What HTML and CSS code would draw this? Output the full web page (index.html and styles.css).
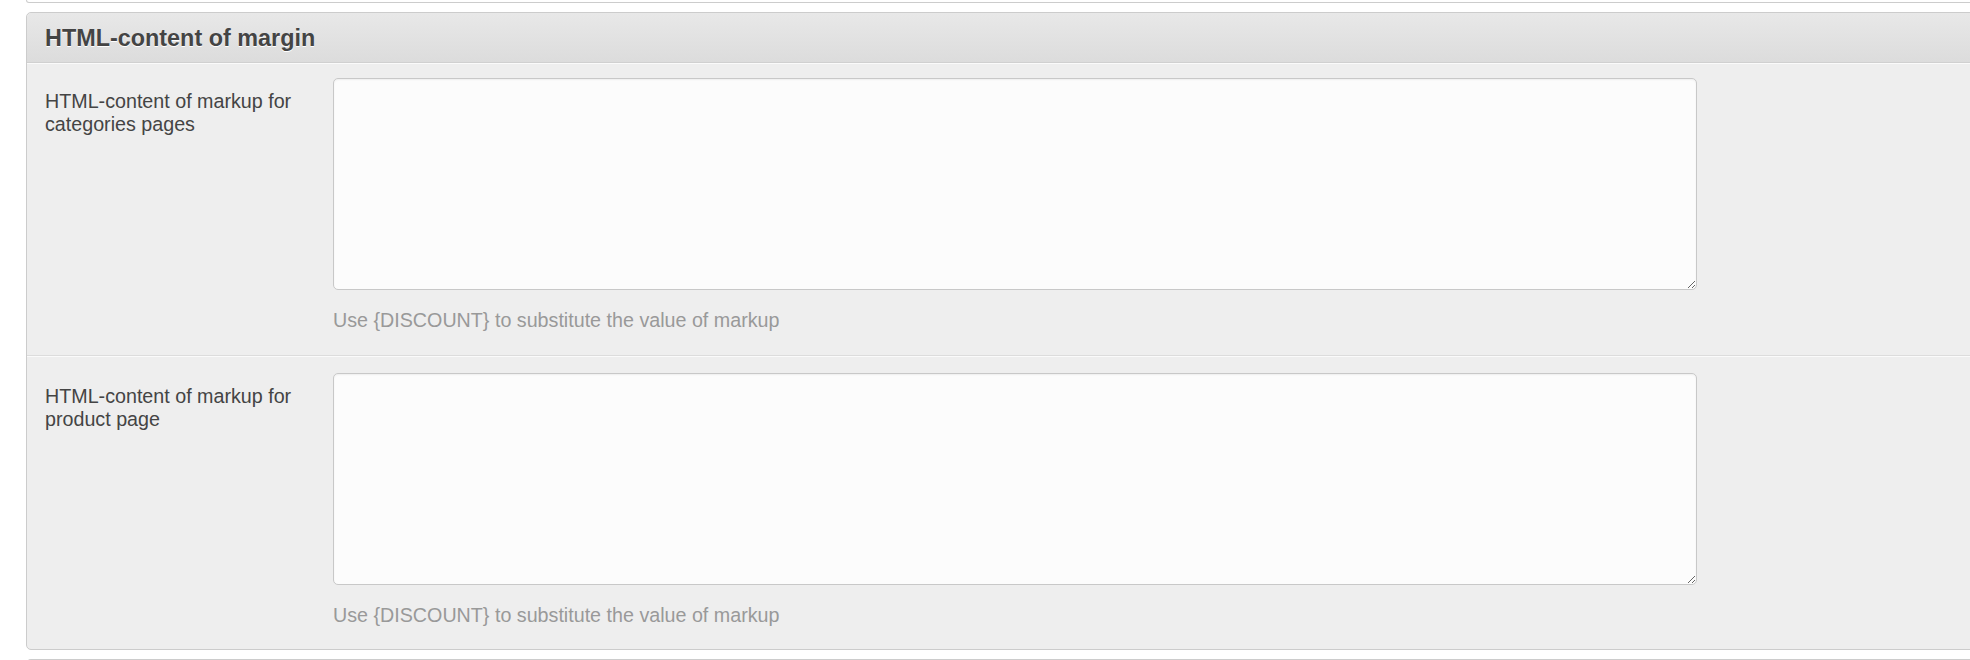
FILE: index.html
```html
<!DOCTYPE html>
<html>
  <head>
    <title>HTML-content of margin</title>
<link rel="stylesheet" href="styles.css">
  </head>
  <body>
    <div class="page">
      <div class="panel-stub top"></div>

      <div class="panel">
        <div class="panel-heading">
          <h3>HTML-content of margin</h3>
        </div>

        <div class="form-group">
          <label class="control-label" for="markupCategories">HTML-content of markup for categories pages</label>
          <div class="control">
            <textarea id="markupCategories" class="form-control"></textarea>
            <div class="help-block">Use {DISCOUNT} to substitute the value of markup</div>
          </div>
        </div>

        <div class="form-group">
          <label class="control-label" for="markupProduct">HTML-content of markup for product page</label>
          <div class="control">
            <textarea id="markupProduct" class="form-control"></textarea>
            <div class="help-block">Use {DISCOUNT} to substitute the value of markup</div>
          </div>
        </div>
      </div>

      <div class="panel-stub bottom"></div>
    </div>
  </body>
</html>
```

FILE: styles.css
```css
html, body {
    margin: 0;
    padding: 0;
    background-color: #fff;
  }
  body {
    font-family: "Liberation Sans", Arial, sans-serif;
    font-size: 19.7px;
    line-height: 23px;
    color: #444;
    overflow: hidden;
  }
  .page {
    padding-left: 26px;
  }
  .panel-stub {
    width: calc(100% + 20px);
    border: 1px solid #ccc;
    background-color: #fff;
  }
  .panel-stub.top {
    height: 2px;
    border-top: none;
    border-radius: 0 0 5px 5px;
    margin-bottom: 9px;
  }
  .panel-stub.bottom {
    height: 10px;
    border-bottom: none;
    border-radius: 5px 5px 0 0;
    margin-top: 9px;
  }
  .panel {
    width: calc(100% + 20px);
    border: 1px solid #ccc;
    border-radius: 5px;
    background-color: #eee;
  }
  .panel-heading {
    padding: 12px 18px 10px;
    background: linear-gradient(to bottom, #e8e8e8, #dcdcdc);
    border-bottom: 1px solid #d0d0d0;
    border-radius: 5px 5px 0 0;
  }
  .panel-heading h3 {
    margin: 0;
    font-size: 23.4px;
    line-height: 27px;
    font-weight: bold;
    color: #444;
    text-shadow: 0 1px 0 #fff;
  }
  .form-group {
    display: flex;
    padding: 16px 18px 23px;
    border-top: 1px solid #fafafa;
    border-bottom: 1px solid #dcdcdc;
  }
  .panel-heading + .form-group {
    padding-top: 14px;
  }
  .form-group:last-child {
    border-bottom: none;
    padding-bottom: 22px;
  }
  .control-label {
    flex: 0 0 268px;
    margin-right: 20px;
    padding-top: 12px;
  }
  .control {
    flex: 0 0 1364px;
  }
  .form-control {
    display: block;
    box-sizing: border-box;
    width: 1364px;
    height: 212px;
    margin: 0;
    padding: 8px 10px;
    border: 1px solid #c8c8c8;
    border-radius: 5px;
    background-color: #fcfcfc;
    box-shadow: inset 0 1px 2px rgba(0, 0, 0, 0.06);
    font-family: inherit;
    font-size: inherit;
    color: #444;
  }
  .help-block {
    margin-top: 19px;
    color: #999;
  }
```
